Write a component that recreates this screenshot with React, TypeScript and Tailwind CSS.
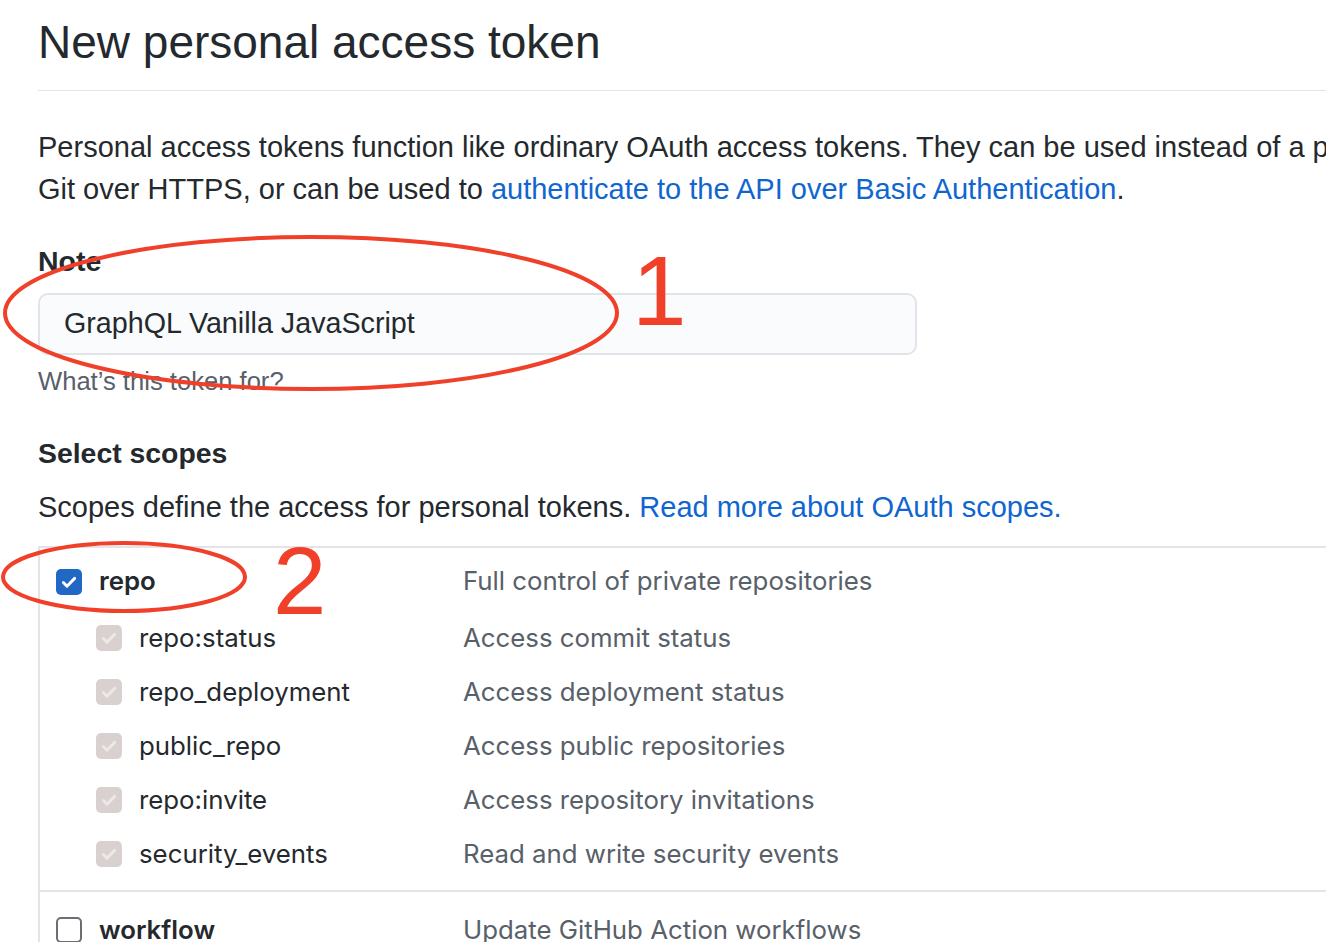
import React from "react";

function CheckIcon({ color }: { color: string }) {
  return (
    <svg width="18" height="18" viewBox="0 0 16 16" fill="none">
      <path d="M3 8.5l3.2 3.2L13 4.8" stroke={color} strokeWidth="2.6" strokeLinecap="round" strokeLinejoin="round" />
    </svg>
  );
}

function Box({ kind }: { kind: "checked" | "disabled" | "empty" }) {
  if (kind === "checked")
    return (
      <span className="w-[26px] h-[26px] rounded-[5px] bg-[#2168c4] flex items-center justify-center shrink-0">
        <CheckIcon color="#ffffff" />
      </span>
    );
  if (kind === "disabled")
    return (
      <span className="w-[26px] h-[26px] rounded-[5px] bg-[#d9d0d0] flex items-center justify-center shrink-0">
        <CheckIcon color="#ece8e8" />
      </span>
    );
  return <span className="w-[26px] h-[26px] rounded-[5px] border-2 border-[#6a6f75] bg-white shrink-0" />;
}

const subs: [string, string][] = [
  ["repo:status", "Access commit status"],
  ["repo_deployment", "Access deployment status"],
  ["public_repo", "Access public repositories"],
  ["repo:invite", "Access repository invitations"],
  ["security_events", "Read and write security events"],
];

export default function App() {
  return (
    <div className="relative w-[1326px] h-[942px] overflow-hidden bg-white text-[#24292e] font-['Liberation_Sans',Arial,sans-serif]">
      <div className="pl-[38px]">
        <h1 className="pt-[14px] text-[46px] leading-[56px] font-normal">New personal access token</h1>
        <div className="mt-[20px] border-b border-[#e4e4e8]" />
        <p className="mt-[35px] text-[29px] leading-[42px] whitespace-nowrap">
          Personal access tokens function like ordinary OAuth access tokens. They can be used instead of a password for
          <br />
          Git over HTTPS, or can be used to{" "}
          <span className="text-[#0f66d0]">authenticate to the API over Basic Authentication</span>.
        </p>
        <div className="mt-[34px] text-[28.5px] leading-[34px] font-bold">Note</div>
        <div className="mt-[15px] w-[879px] h-[62px] rounded-[10px] border-2 border-[#e1e4e8] bg-[#fafbfc] flex items-center pl-[24px] text-[28.7px]">
          GraphQL Vanilla JavaScript
        </div>
        <div className="mt-[11px] text-[25.6px] leading-[30px] text-[#586069]">What’s this token for?</div>
        <div className="mt-[40px] text-[28.4px] leading-[34px] font-bold">Select scopes</div>
        <p className="mt-[20px] text-[29px] leading-[34px] whitespace-nowrap">
          Scopes define the access for personal tokens.{" "}
          <span className="text-[#0f66d0]">Read more about OAuth scopes.</span>
        </p>
        <div className="mt-[22px] border-t-2 border-l-2 border-[#e4e4e8] font-['Inter',sans-serif] text-[25.8px]">
          <div className="pt-[6px] pb-[9px] border-b-2 border-[#e4e4e8]">
            <div className="h-[57px] pb-[2px] flex items-center">
              <div className="w-[423px] flex items-center pl-[16px] gap-[17px]">
                <Box kind="checked" />
                <span className="font-semibold">repo</span>
              </div>
              <span className="text-[#586069]">Full control of private repositories</span>
            </div>
            {subs.map(([n, d]) => (
              <div key={n} className="h-[54px] flex items-center">
                <div className="w-[423px] flex items-center pl-[56px] gap-[17px]">
                  <Box kind="disabled" />
                  <span>{n}</span>
                </div>
                <span className="text-[#586069]">{d}</span>
              </div>
            ))}
          </div>
          <div className="pt-[11px]">
            <div className="h-[54px] flex items-center">
              <div className="w-[423px] flex items-center pl-[16px] gap-[17px]">
                <Box kind="empty" />
                <span className="font-semibold">workflow</span>
              </div>
              <span className="text-[#586069]">Update GitHub Action workflows</span>
            </div>
          </div>
        </div>
      </div>

      <svg className="absolute left-0 top-0 pointer-events-none" width="1326" height="942">
        <ellipse cx="311" cy="313" rx="306" ry="76" fill="none" stroke="#f0402a" strokeWidth="4" />
        <ellipse cx="124" cy="577" rx="121" ry="34" fill="none" stroke="#f0402a" strokeWidth="4" />
      </svg>
      <span className="absolute left-[632px] top-[236px] text-[98px] leading-[110px] text-[#f0402a] font-['Liberation_Sans',Arial,sans-serif]">1</span>
      <span className="absolute left-[273px] top-[528px] text-[96px] leading-[106px] text-[#f0402a] font-['Liberation_Sans',Arial,sans-serif]">2</span>
    </div>
  );
}
